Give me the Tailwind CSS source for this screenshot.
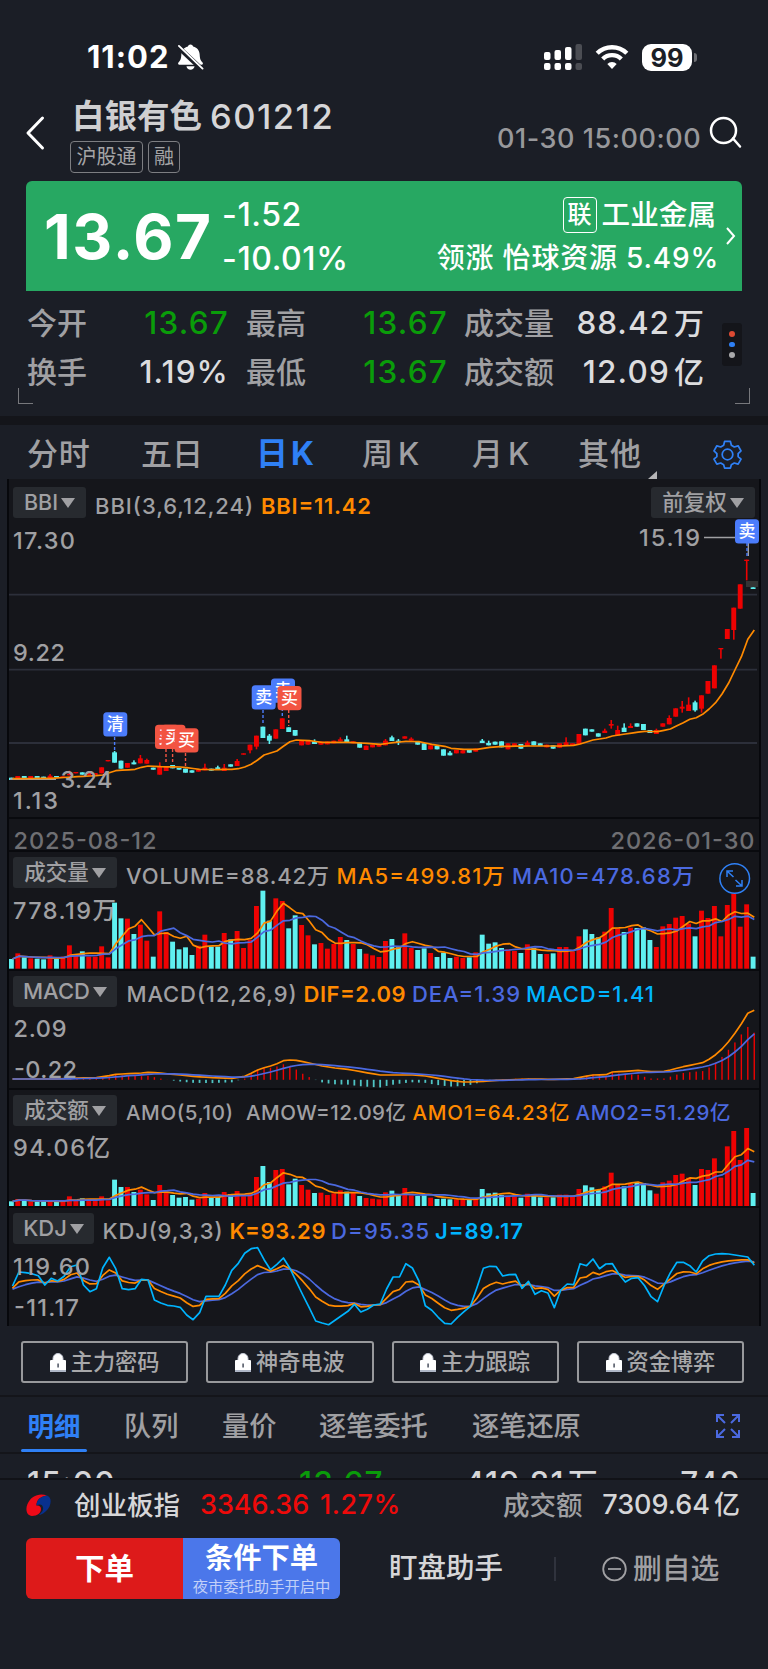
<!DOCTYPE html>
<html lang="zh-CN">

<head>
    <meta charset="UTF-8">
    <meta name="viewport" content="width=device-width, initial-scale=1.0">
    <title>白银有色 601212</title>
    <script src="https://cdn.jsdelivr.net/npm/@tailwindcss/browser@4"></script>
</head>
<body class="bg-[#1b1e26] text-[#d6d6d8] w-[768px] h-[1669px] overflow-hidden whitespace-nowrap [font-family:Inter,'Noto_Sans_CJK_SC',sans-serif]">

    <!-- Status bar -->
    <div class="h-[104px] pt-[40px] pl-[87px] pr-[71px] flex items-start justify-between text-white">
        <div class="flex items-center h-[34px] gap-[6px]">
            <span class="text-[31px] font-bold tracking-[1px] w-[84px]">11:02</span>
            <svg class="w-[27px] h-[28px]" viewBox="0 0 28 28" fill="#fff">
                <path d="M14 1c1.600 0 2.500 1 2.700 2.200 4.500 1.200 6.700 4.600 6.800 8.300.2 4.500 1 6.300 3 8.200.8 1 .3 2.300-1 2.300H2.500c-1.300 0-1.800-1.300-1-2.300 2-1.900 2.800-3.700 3-8.200.1-3.700 2.300-7.100 6.800-8.300C11.500 2 12.400 1 14 1zM9.800 23.700h8.400c-.4 2.100-2 3.500-4.200 3.500s-3.800-1.400-4.200-3.500z"/>
                <path d="M1 3.500l25 23.500" stroke="#1b1e26" stroke-width="5"/>
                <path d="M2 2.500l24.500 23.500" stroke="#fff" stroke-width="2" stroke-linecap="round"/>
            </svg>
        </div>
        <div class="flex items-center h-[34px] gap-[13px]">
            <svg class="w-[38px] h-[28px]" viewBox="0 0 38 28" fill="#fff">
                <rect x="0" y="9" width="6.500" height="8" rx="2"/><rect x="10.500" y="7" width="6.500" height="10" rx="2"/><rect x="21" y="4" width="6.500" height="13" rx="2"/><rect x="31.500" y="1" width="6.500" height="16" rx="2" fill="#4b4d53"/>
                <rect x="0" y="20" width="6.500" height="7" rx="2"/><rect x="10.500" y="20" width="6.500" height="7" rx="2"/><rect x="21" y="20" width="6.500" height="7" rx="2"/><rect x="31.500" y="20" width="6.500" height="7" rx="2" fill="#4b4d53"/>
            </svg>
            <svg class="w-[34px] h-[26px]" viewBox="0 0 34 26" fill="none" stroke="#fff" stroke-width="4.400">
                <path d="M2.200 9.300a21 21 0 0 1 29.600 0"/><path d="M7.700 15a13.200 13.200 0 0 1 18.600 0"/>
                <path d="M17 25l-4.700-5a6.600 6.600 0 0 1 9.400 0z" fill="#fff" stroke="none"/>
            </svg>
            <div class="flex items-center gap-[2px]">
                <span class="w-[50px] h-[27px] rounded-[9px] bg-white text-[#1b1e26] text-[25.500px] leading-[27px] font-bold text-center">99</span>
                <span class="w-[3px] h-[9px] rounded-r-full bg-[#6d6e73]"></span>
            </div>
        </div>
    </div>

    <!-- Stock title -->
    <header class="h-[77px] grid grid-cols-[70px_427px_212px_59px]">
        <svg class="w-[22px] h-[36px] mt-[11px] ml-[24px]" viewBox="0 0 22 36" fill="none" stroke="#fff" stroke-width="3" stroke-linecap="round" stroke-linejoin="round"><path d="M18.500 3L4 18l14.500 15"/></svg>
        <div>
            <h1 class="h-[34px] mt-[-4px] pl-[2px] flex items-center text-[34.500px] font-medium">
                <span class="text-[32.500px] font-bold w-[138px] text-[#cfcfd1]">白银有色</span><span class="tracking-[1.500px]">601212</span>
            </h1>
            <div class="flex gap-[5px] mt-[7px] text-[20px] text-[#a5a5a7]">
                <span class="w-[73px] h-[32px] leading-[30px] border border-[#7d7e82] rounded-[4px] text-center">沪股通</span>
                <span class="w-[32px] h-[32px] leading-[30px] border border-[#7d7e82] rounded-[4px] text-center">融</span>
            </div>
        </div>
        <span class="text-[27px] leading-[34px] mt-[18px] text-[#98989b] tracking-[0.550px] font-medium">01-30 15:00:00</span>
        <svg class="w-[34px] h-[34px] mt-[12px]" viewBox="0 0 34 34" fill="none" stroke="#fff" stroke-width="2.500" stroke-linecap="round"><circle cx="14.500" cy="14.500" r="12.500"/><path d="M24 22.500l7 8"/></svg>
    </header>

    <!-- Price card -->
    <section class="mx-[26px] h-[110px] bg-[#27a862] rounded-t-[6px] text-white grid grid-cols-[18px_178px_150px_1fr_26px]">
        <span></span>
        <strong class="text-[62px] leading-[112px] font-bold tracking-[1.600px]">13.67</strong>
        <div class="pt-[12px] text-[32px] leading-[44px] font-medium tracking-[0.600px]">
            <div>-1.52</div>
            <div>-10.01%</div>
        </div>
        <div class="pt-[12px] flex flex-col items-end font-medium text-[28.600px] leading-[44px]">
            <div class="flex items-center gap-[5px]"><span class="w-[34px] h-[36px] leading-[33px] text-[24px] text-center border-[1.500px] border-white rounded-[4px]">联</span>工业金属</div>
            <div class="text-[28px] tracking-[0.800px] mr-[-3px] mt-[-1px]">领涨 怡球资源 5.49%</div>
        </div>
        <svg class="w-[12px] h-[20px] mt-[45px] ml-[9px]" viewBox="0 0 12 20" fill="none" stroke="#fff" stroke-width="2"><path d="M2 2l7 8-7 8"/></svg>
    </section>

    <!-- Quote grid -->
    <section class="relative h-[125px] pt-[8px] pl-[27px] text-[30px] leading-[48.500px] grid grid-cols-[60px_142px_17px_60px_142px_16px_92px_148px] content-start text-[#a0a0a3] font-medium">
        <span>今开</span><span class="text-right text-[#0a9c0a] text-[31.500px] tracking-[1.200px]">13.67</span><i></i>
        <span>最高</span><span class="text-right text-[#0a9c0a] text-[31.500px] tracking-[1.200px]">13.67</span><i></i>
        <span>成交量</span><span class="text-right text-[#dcdcde] text-[31.500px] tracking-[1px]">88.42<span class="text-[30px] ml-[4px] tracking-normal">万</span></span>
        <span>换手</span><span class="text-right text-[#dcdcde] text-[31.500px] tracking-[1.100px]">1.19%</span><i></i>
        <span>最低</span><span class="text-right text-[#0a9c0a] text-[31.500px] tracking-[1.200px]">13.67</span><i></i>
        <span>成交额</span><span class="text-right text-[#dcdcde] text-[31.500px] tracking-[1.200px]">12.09<span class="text-[30px] ml-[4px] tracking-normal">亿</span></span>
        <span class="absolute left-[18px] top-[97px] w-[15px] h-[16px] border-l-[1.500px] border-b-[1.500px] border-[#77787c]"></span>
        <span class="absolute left-[735px] top-[97px] w-[15px] h-[16px] border-r-[1.500px] border-b-[1.500px] border-[#77787c]"></span>
        <div class="absolute left-[722px] top-[32px] w-[20px] h-[43px] rounded-[3px] bg-[#14151a] flex flex-col items-center justify-center gap-[5px]">
            <span class="size-[5.500px] rounded-full bg-[#dd4a33]"></span><span class="size-[5.500px] rounded-full bg-[#2f80f5]"></span><span class="size-[5.500px] rounded-full bg-[#a9a9ab]"></span>
        </div>
    </section>
    <div class="h-[9px] bg-[#14151a]"></div>

    <!-- Period tabs -->
    <nav class="h-[54px] pl-[27px] grid grid-cols-[114px_115px_106px_110px_106px_70px_65px_29px] items-center text-[31px] leading-[58px] text-[#a0a0a3] font-medium">
        <span class="tracking-[0.800px]">分时</span><span>五日</span><span class="text-[#2f80f5] font-bold text-[32px]">日<span class="ml-[3px]">K</span></span>
        <span>周<span class="ml-[5px]">K</span></span><span>月<span class="ml-[5px]">K</span></span><span class="tracking-[1px]">其他</span>
        <svg class="w-[9px] h-[8px] self-end mb-[4px]" viewBox="0 0 9 8" fill="#b5b5b7"><path d="M9 0v8H0z"/></svg>
        <svg class="w-[29px] h-[29px]" viewBox="0 0 30 30" fill="none" stroke="#2f80f5" stroke-width="1.800" stroke-linejoin="round"><circle cx="15" cy="15" r="5.500"/><path d="M12 1.500h6l1 4 3 1.700 4-1.200 3 5.200-3 2.800v3.200l3 2.600-3 5.200-4-1.200-3 1.700-1 3.500h-6l-1-3.500-3-1.700-4 1.200-3-5.200 3-2.600V14l-3-2.800L4 6l4 1.200 3-1.700z"/></svg>
    </nav>

    <!-- Charts, one svg per panel, filled by the script below -->
    <main class="h-[847px] px-[7px]">
        <div class="bg-[#15161b] border-x-2 border-[#07080c] h-full">
            <div class="relative h-[340px] border-b-2 border-[#090a0e]">
                <svg id="price" class="absolute inset-0 w-[750px] h-[340px]" viewBox="9 479 750 340"></svg>
                <div class="relative flex justify-between pt-[8px] pl-[4px] pr-[4px] text-[21.500px] leading-[31px] text-[#a0a0a3]">
                    <button class="w-[73px] h-[31px] rounded-[3px] bg-[#272a2f] flex items-center justify-center gap-[3px] font-medium">BBI<svg class="w-[14px] h-[10px]" viewBox="0 0 14 10" fill="#a0a0a3"><path d="M0 0h14L7 10z"/></svg></button>
                    <button class="w-[104px] h-[31px] rounded-[3px] bg-[#272a2f] flex items-center justify-center gap-[3px] font-medium">前复权<svg class="w-[14px] h-[10px]" viewBox="0 0 14 10" fill="#a0a0a3"><path d="M0 0h14L7 10z"/></svg></button>
                </div>
            </div>
            <svg id="dates" class="w-[750px] h-[31px] block" viewBox="9 819 750 31"></svg>
            <div class="relative h-[119px] border-t-2 border-[#090a0e]">
                <svg id="volume" class="absolute inset-0 w-[750px] h-[119px]" viewBox="9 852 750 119"></svg>
                <button class="relative mt-[5px] ml-[4px] w-[104px] h-[31px] rounded-[3px] bg-[#272a2f] flex items-center justify-center gap-[3px] text-[21.500px] text-[#a0a0a3] font-medium">成交量<svg class="w-[14px] h-[10px]" viewBox="0 0 14 10" fill="#a0a0a3"><path d="M0 0h14L7 10z"/></svg></button>
            </div>
            <div class="relative h-[119px] border-t-2 border-[#090a0e]">
                <svg id="macd" class="absolute inset-0 w-[750px] h-[117px]" viewBox="9 971 750 117"></svg>
                <button class="relative mt-[5px] ml-[4px] w-[104px] h-[31px] rounded-[3px] bg-[#272a2f] flex items-center justify-center gap-[3px] text-[22px] text-[#a0a0a3] font-medium">MACD<svg class="w-[14px] h-[10px]" viewBox="0 0 14 10" fill="#a0a0a3"><path d="M0 0h14L7 10z"/></svg></button>
            </div>
            <div class="relative h-[118px] border-t-2 border-[#090a0e]">
                <svg id="amount" class="absolute inset-0 w-[750px] h-[116px]" viewBox="9 1090 750 116"></svg>
                <button class="relative mt-[5px] ml-[4px] w-[104px] h-[31px] rounded-[3px] bg-[#272a2f] flex items-center justify-center gap-[3px] text-[21.500px] text-[#a0a0a3] font-medium">成交额<svg class="w-[14px] h-[10px]" viewBox="0 0 14 10" fill="#a0a0a3"><path d="M0 0h14L7 10z"/></svg></button>
            </div>
            <div class="relative h-[120px] border-t-2 border-[#090a0e]">
                <svg id="kdj" class="absolute inset-0 w-[750px] h-[118px]" viewBox="9 1208 750 118"></svg>
                <button class="relative mt-[5px] ml-[4px] w-[81px] h-[31px] rounded-[3px] bg-[#272a2f] flex items-center justify-center gap-[3px] text-[22px] text-[#a0a0a3] font-medium">KDJ<svg class="w-[14px] h-[10px]" viewBox="0 0 14 10" fill="#a0a0a3"><path d="M0 0h14L7 10z"/></svg></button>
            </div>
        </div>
    </main>

    <!-- Locked indicators -->
    <section id="locked" class="h-[71px] pt-[15px] pl-[21px] pr-[24px] grid grid-cols-4 gap-[18px] border-b-2 border-[#14151a]"></section>

    <!-- Detail tabs -->
    <nav class="h-[57px] pl-[21px] grid grid-cols-[103px_98px_97px_153px_244px_28px] text-[27.200px] leading-[59px] text-[#a0a0a3] font-medium border-b-2 border-[#14151a]">
        <span class="relative w-[66px] h-[55px] text-center text-[#2f80f5] font-bold text-[26.500px]">明细<i class="absolute left-0 bottom-0 w-[66px] h-[3px] rounded bg-[#2f80f5]"></i></span>
        <span class="h-[55px]">队列</span><span class="h-[55px]">量价</span><span class="h-[55px]">逐笔委托</span><span class="h-[55px]">逐笔还原</span>
        <svg class="w-[24px] h-[24px] mt-[17px]" viewBox="0 0 24 24" fill="none" stroke="#4b69e0" stroke-width="2"><path d="M1 8V1h7M1 1l8 8M16 1h7v7M23 1l-8 8M1 16v7h7M1 23l8-8M23 16v7h-7M23 23l-8-8"/></svg>
    </nav>
    <div class="h-[26px] overflow-hidden pl-[27px] pt-[9px] grid grid-cols-[272px_165px_204px_100px] text-[31.500px] leading-[40px] font-medium tracking-[1.200px] border-b-2 border-[#111217]">
        <span>15:00</span><span class="text-[#0a9c0a]">13.67</span><span>419.81<span class="text-[30px] ml-[3px]">万</span></span><span class="text-right pr-[27px]">740</span>
    </div>

    <!-- Index ticker -->
    <div class="h-[50px] pl-[26px] pr-[28px] flex items-center text-[27px] leading-[50px] font-medium">
        <svg class="w-[25px] h-[24px] mr-[23px]" viewBox="0 0 25 24">
            <path d="M21 2.500C13-.5 5 3 1.500 11c-2.500 6-.5 12 4.500 12 5.500 0 9-3 9-7 0-2.500-2-4-4.500-3.500C10.500 7 14 3.500 21 2.500z" fill="#ee0a18"/>
            <path d="M21 2.500c4 1.500 4.500 6 2.500 11-2 4-6.500 8-10.500 8.500 3-2.500 4.500-4.500 4-7.500-.5-2.500-2.500-4-6.500-2C10.500 7 14 3.500 21 2.500z" fill="#08308e"/>
        </svg>
        <span class="w-[126px] text-[26.500px]">创业板指</span>
        <span class="w-[120px] text-[#ee0a0a]">3346.36</span>
        <span class="w-[183px] text-[#ee0a0a] tracking-[0.500px]">1.27%</span>
        <span class="text-[26.500px] text-[#a0a0a3]">成交额</span>
        <span class="ml-auto">7309.64<span class="ml-[4px] text-[26px]">亿</span></span>
    </div>

    <!-- Bottom actions -->
    <footer class="mt-[8px] h-[61px] pl-[26px] grid grid-cols-[157px_157px_49px_165px_48px_31px_auto] items-center">
        <button class="h-[61px] bg-[#dd1a1a] rounded-l-[6px] text-white text-[29.500px] font-bold">下单</button>
        <button class="h-[61px] bg-[#4b77ea] rounded-r-[6px] text-white flex flex-col items-center pt-[3px]">
            <span class="text-[28.300px] leading-[34px] font-bold">条件下单</span>
            <span class="text-[15.300px] leading-[24px] text-[#c2d0f8]">夜市委托助手开启中</span>
        </button>
        <span></span>
        <span class="text-[28.500px] font-medium">盯盘助手</span>
        <i class="w-[2px] h-[24px] bg-[#30333d]"></i>
        <svg class="w-[26px] h-[26px]" viewBox="0 0 26 26" fill="none" stroke="#a0a0a3" stroke-width="1.800"><circle cx="12.500" cy="13" r="11.300"/><path d="M6 13h13"/></svg>
        <span class="text-[28.800px] font-medium text-[#a0a0a3]">删自选</span>
    </footer>
    <div class="mt-[70px] h-[1px] bg-[#69696e]"></div>

    <script>
        const PITCH = 6.45;
        const RED = '#ee0202', CYAN = '#5ff0f0', ORANGE = '#ff8a00', BLUE = '#4b69e0', SKY = '#00b4ff', GRAY = '#a0a0a3';
        const barX = i => 11.3 + PITCH * i;
        const lineX = i => 12.5 + PITCH * i;

        // Days that closed lower, all others are red
        const down = new Set([0,2,4,5,7,11,16,17,19,22,25,26,27,28,31,32,34,39,40,43,44,47,52,54,59,60,64,63,66,67,68,71,73,74,75,76,79,81,82,84,89,90,91,95,97,98,99,106,115]);
        const color = i => down.has(i) ? CYAN : RED;

        // Pixel tops, three units to a pixel
        const vol = [327,310,322,325,326,328,316,326,320,286,318,304,320,320,289,322,158,205,206,252,224,272,320,184,246,275,298,292,315,287,254,290,290,249,268,243,294,270,168,122,212,145,153,235,196,225,256,283,279,296,282,261,270,282,297,311,316,321,273,267,292,250,294,300,295,309,321,308,324,320,324,322,307,254,281,277,294,298,303,309,283,294,312,312,310,291,291,304,259,238,252,262,245,174,236,246,233,234,232,270,291,229,222,203,198,221,259,182,204,168,259,165,131,230,163,320];
        const amo = [349,342,346,350,350,349,346,350,346,334,346,340,346,346,334,346,284,306,306,321,314,328,345,300,320,330,338,336,344,341,324,337,336,321,327,318,334,326,276,243,291,255,252,298,281,300,314,324,323,330,325,316,320,324,333,339,341,343,322,317,331,309,331,333,331,338,342,341,343,343,344,343,339,312,325,323,330,333,335,338,326,331,337,337,337,329,329,335,312,301,307,315,304,263,300,304,297,292,294,316,326,292,287,270,266,278,300,252,255,220,278,184,138,225,129,324];
        const jLine = [603,561,563,566,572,600,580,588,574,545,540,600,620,611,548,517,551,611,614,611,583,585,645,654,661,663,667,690,704,683,634,634,634,600,556,535,505,491,488,524,554,538,519,550,590,630,668,708,714,719,706,692,679,658,681,673,660,657,612,576,576,536,549,588,662,676,697,715,717,697,680,664,608,550,544,545,573,569,568,610,589,628,617,624,668,615,597,599,536,542,522,551,537,536,567,591,580,578,602,635,650,602,563,532,532,542,561,528,512,507,506,507,510,513,516,541];
        const difKeys = [[0,687],[7,687],[10,684],[13,683],[15,677],[16,673],[20,669],[21,667],[22,668],[25,673],[28,679],[31,683],[34,685],[36,679],[37,670],[38,660],[39,653],[40,648],[41,641],[42,632],[43,630],[44,631],[46,639],[48,648],[50,654],[52,658],[54,665],[57,675],[62,675],[64,678],[66,685],[68,692],[70,696],[71,696],[73,694],[76,690],[80,687],[84,688],[87,686],[90,675],[92,674],[93,666],[95,664],[97,661],[99,665],[101,664],[102,660],[104,650],[105,646],[107,638],[108,628],[109,614],[110,597],[111,575],[112,550],[113,521],[114,490],[115,481]];
        const bbiKeys = [[0,926],[6,925],[10,920],[13,917],[14,915],[16,902],[19,898],[20,892],[21,888],[23,890],[26,891],[27,893],[29,898],[31,899],[34,898],[35,896],[36,891],[37,883],[38,870],[39,855],[41,843],[42,829],[43,815],[44,810],[46,812],[48,817],[52,817],[54,819],[57,823],[59,818],[61,814],[63,815],[65,823],[67,829],[68,835],[70,838],[72,838],[74,832],[76,829],[80,828],[85,828],[87,826],[88,822],[90,810],[92,804],[93,798],[95,792],[98,784],[100,785],[102,777],[104,758],[105,748],[106,743],[107,733],[108,717],[109,698],[110,672],[111,640],[112,600],[113,560],[114,508],[115,480]];
        // body top, body bottom, wick top, wick bottom
        const candles = [[923,930],[918,926],[918,924],[918,924],[918,924],[920,925],[917,924,912],[918,922],[919,923],[912,916,902],[906,910],[907,914],[908,916],[909,917],[892,910],[870,874],[847,878,843],[872,896],[879,893],[877,883,871],[865,880,855],[870,881,866],[893,899],[888,914,877],[889,903],[885,895],[894,899],[896,908],[901,908],[899,905],[893,901,881],[896,902],[892,899,887],[893,903,882],[883,890],[873,888,867],[850,854],[824,841,824,850],[797,830,797,838],[770,804],[797,812,792,822],[778,806],[745,777],[772,786],[780,797],[812,826],[812,824],[813,822,808],[815,824],[815,823],[812,820],[808,814,802],[808,816,797],[814,820],[818,833],[827,840],[824,832],[824,830],[812,826,807],[802,813,797],[812,817,807,825],[799,806],[806,812,802],[816,824],[820,840],[826,838],[828,838],[838,857],[848,856,843],[840,850],[841,850,837],[840,848],[836,845],[812,819,807],[819,826,812],[815,824],[814,832],[820,838],[820,828],[822,836],[818,828,812],[814,826],[820,828],[824,832],[826,836],[820,833],[817,826,802],[820,828],[792,822],[776,796],[778,785],[790,800],[782,789,776],[762,767,750,776],[780,797,767],[773,786,760],[768,774,760],[760,770],[762,780],[780,789],[780,792,776],[760,770],[744,763,736],[715,740],[710,716,693,728],[704,723,682],[697,721,692,725],[676,716,676,728],[633,671],[586,655],[534,538,534,566],[477,507],[413,480,413,509],[343,416],[269,273,269,331],[352,357]];

        function interpolate(keys) {
            const out = [];
            for (let k = 0; k < keys.length - 1; k++) {
                const [a, ya] = keys[k], [b, yb] = keys[k + 1];
                for (let i = a; i < b; i++) out.push(ya + (yb - ya) * (i - a) / (b - a));
            }
            out.push(keys[keys.length - 1][1]);
            return out;
        }

        function average(data, n) {
            return data.map((_, i) => {
                const part = data.slice(Math.max(0, i - n + 1), i + 1);
                return part.reduce((a, b) => a + b) / part.length;
            });
        }

        const polyline = (data, top, stroke) =>
            `<polyline fill="none" stroke="${stroke}" stroke-width="1.700" stroke-linejoin="round" points="${data.map((y, i) => lineX(i).toFixed(1) + ',' + (top + y / 3).toFixed(1)).join(' ')}"/>`;

        const bars = (data, top, base) =>
            data.map((y, i) => `<rect x="${barX(i) - 2.4}" y="${top + y / 3}" width="4.900" height="${(base - y) / 3}" fill="${color(i)}"/>`).join('');

        const label = (x, y, w, size, fill, str, weight = 500) =>
            `<text x="${x}" y="${y}" font-size="${size}" font-weight="${weight}" fill="${fill}" textLength="${w}">${str}</text>`;

        const tag = (x, y, fill, str, w = 24) =>
            `<rect x="${x}" y="${y}" width="${w}" height="24.300" rx="3.500" fill="${fill}"/><text x="${x + 12}" y="${y + 18}" font-size="17" font-weight="500" fill="#fff" text-anchor="middle">${str}</text>`;

        const dash = (x, y1, y2, stroke) => `<path d="M${x} ${y1}V${y2}" stroke="${stroke}" stroke-width="1.400" stroke-dasharray="3 2"/>`;

        function draw(id, ...parts) {
            document.getElementById(id).innerHTML = parts.join('');
        }

        const TAG_BLUE = '#4b7cfb', TAG_RED = '#f25442';
        draw('price',
            [594.7, 669.7, 743].map(y => `<path d="M9 ${y}H757" stroke="#2c2f3a" stroke-width="1.800"/>`).join(''),
            candles.map(([t, b, wt = t, wb = b], i) =>
                `<rect x="${barX(i) - 2.4}" y="${470 + t / 3}" width="4.900" height="${(b - t) / 3}" fill="${color(i)}"/><rect x="${barX(i) - 0.7}" y="${470 + wt / 3}" width="1.600" height="${(wb - wt) / 3}" fill="${color(i)}"/>`).join(''),
            '<path d="M10 779.300H56M704 537.500H736M748.300 543V556" stroke="#a0a0a3" stroke-width="1.400"/>',
            '<rect x="746" y="581" width="12" height="6" fill="#333435"/>',
            polyline(interpolate(bbiKeys), 470, ORANGE),
            dash(114.6, 737, 751, TAG_BLUE), dash(166, 749, 764, TAG_RED), dash(172.6, 749, 764, TAG_RED), dash(185.5, 753, 767, TAG_RED),
            dash(263, 710, 724, TAG_BLUE), dash(282.3, 703, 717, TAG_BLUE), dash(288.7, 710, 726, TAG_RED), dash(747, 543, 557, TAG_BLUE),
            tag(103.3, 712.3, TAG_BLUE, '清'),
            tag(155, 724.8, TAG_RED, '买'), tag(161.5, 724.8, TAG_RED, '买'), tag(174.5, 728.3, TAG_RED, '买'),
            tag(271, 678.4, TAG_BLUE, '卖'), tag(251.7, 685.3, TAG_BLUE, '卖'), tag(277.5, 686, TAG_RED, '买'),
            tag(735, 519.2, TAG_BLUE, '卖'),
            label(95, 513.7, 158, 22, GRAY, 'BBI(3,6,12,24)'), label(261, 513.7, 110, 22, ORANGE, 'BBI=11.42', 600),
            label(13, 549, 62, 23.5, GRAY, '17.30'), label(13, 661, 52, 23.5, GRAY, '9.22'),
            label(60.5, 788.3, 52, 23.5, GRAY, '3.24'), label(13, 809, 45, 23.5, GRAY, '1.13'),
            label(639, 546.3, 61, 23.5, GRAY, '15.19'));
        draw('dates', label(13.5, 848.7, 143, 23.5, '#6f6f73', '2025-08-12'), label(610.5, 848.7, 144, 23.5, '#6f6f73', '2026-01-30'));

        draw('volume', bars(vol, 850, 356), polyline(average(vol, 5), 850, ORANGE), polyline(average(vol, 10), 850, BLUE),
            label(126, 883.7, 203, 22, GRAY, 'VOLUME=88.42万'), label(336.5, 883.7, 168, 22, ORANGE, 'MA5=499.81万'), label(512, 883.7, 182, 22, BLUE, 'MA10=478.68万'),
            label(13, 918.5, 103, 23.5, GRAY, '778.19万'),
            '<g fill="none" stroke="#2f80f5" stroke-width="1.500"><circle cx="734.700" cy="878.500" r="14.800"/><path d="M727 877v-6h6M727 871l6.500 6M742 880v6h-6M742 886l-6.500-6"/></g>');

        // DEA smooths DIF, the histogram is twice their gap
        const dif = interpolate(difKeys);
        const dea = [];
        dif.forEach((v, i) => dea.push(i ? dea[i - 1] * 0.8 + v * 0.2 : v));
        draw('macd',
            dif.map((v, i) => {
                const h = 2 * (dea[i] - v) / 3;
                return h > 0 ? `<rect x="${lineX(i) - 0.7}" y="${1079.8 - h}" width="1.400" height="${h}" fill="${RED}"/>`
                    : `<rect x="${lineX(i) - 0.9}" y="1079.800" width="1.800" height="${-h}" fill="#4fc4c4"/>`;
            }).join(''),
            polyline(dif, 850, ORANGE), polyline(dea, 850, BLUE),
            label(126.5, 1002.2, 170, 22, GRAY, 'MACD(12,26,9)'), label(303.5, 1002.2, 102, 22, ORANGE, 'DIF=2.09', 600),
            label(412, 1002.2, 108, 22, BLUE, 'DEA=1.39'), label(526, 1002.2, 128, 22, SKY, 'MACD=1.41'),
            label(13.5, 1037, 53, 23.5, GRAY, '2.09'), label(14, 1078.3, 63, 23.5, GRAY, '-0.22'));

        draw('amount', bars(amo, 1085, 363), polyline(average(amo, 5), 1085, ORANGE), polyline(average(amo, 10), 1085, BLUE),
            label(126, 1119.7, 107, 20.5, GRAY, 'AMO(5,10)'), label(246, 1119.7, 160, 20.5, GRAY, 'AMOW=12.09亿'),
            label(412.5, 1119.7, 157, 20.5, ORANGE, 'AMO1=64.23亿'), label(575.5, 1119.7, 155, 20.5, BLUE, 'AMO2=51.29亿'),
            label(13, 1156, 97, 23.5, GRAY, '94.06亿'));

        // J = 3K - 2D, D = 2/3 D' + 1/3 K
        const k = [], d = [];
        jLine.forEach((j, i) => {
            const prev = i ? d[i - 1] : 614;
            k.push((3 * j + 4 * prev) / 7);
            d.push((2 * prev + k[i]) / 3);
        });
        draw('kdj', polyline(d, 1085, BLUE), polyline(k, 1085, ORANGE), polyline(jLine, 1085, SKY),
            label(102.5, 1239.2, 120, 22, GRAY, 'KDJ(9,3,3)'), label(229.5, 1239.2, 96, 22, ORANGE, 'K=93.29', 600),
            label(331, 1239.2, 98, 22, BLUE, 'D=95.35'), label(435, 1239.2, 88, 22, SKY, 'J=89.17', 600),
            label(13, 1274.7, 77, 23.5, GRAY, '119.60'), label(14, 1315.5, 65, 23.5, GRAY, '-11.17'));

        document.getElementById('locked').innerHTML = ['主力密码', '神奇电波', '主力跟踪', '资金博弈'].map(name => `
            <button class="h-[42px] border-2 border-[#98999c] rounded-[3px] flex items-center justify-center gap-[5px] text-[22.200px] text-[#a8a8aa] font-medium">
                <svg class="w-[16px] h-[19px]" viewBox="0 0 16 19"><path d="M3 9V5.500a5 5 0 0 1 10 0V9" fill="#fff" stroke="#c5cad6" stroke-width="1"/><rect y="7" width="16" height="12" rx="1" fill="#fff"/><rect y="17" width="16" height="2" fill="#aeb6c6"/><rect x="7.300" y="10.500" width="1.600" height="4" fill="#555b68"/></svg>${name}
            </button>`).join('');
    </script>
</body>

</html>
